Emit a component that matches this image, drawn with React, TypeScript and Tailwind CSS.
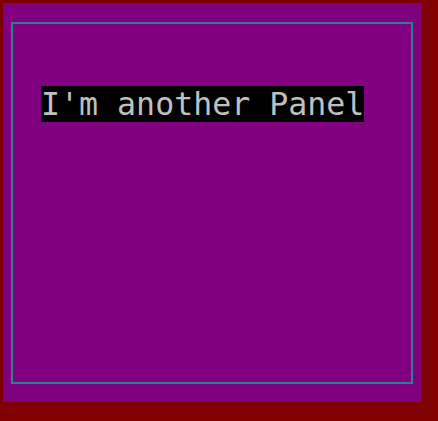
export default function App() {
  return (
    <div className="w-[438px] h-[421px] bg-[#800000] p-[3px]">
      <div className="w-[418px] h-[399px] bg-[#800080] pt-[19px] pl-[8px]">
        <div className="w-[402px] h-[362px] border-2 border-[#2a8090] pt-[62px] pl-[28px]">
          <div
            className="inline-block bg-black text-[#c0c0c0] text-[31.6px] leading-[36px] h-[36px] whitespace-nowrap"
            style={{ fontFamily: '"DejaVu Sans Mono", "Liberation Mono", monospace' }}
          >
            I'm another Panel
          </div>
        </div>
      </div>
    </div>
  );
}
